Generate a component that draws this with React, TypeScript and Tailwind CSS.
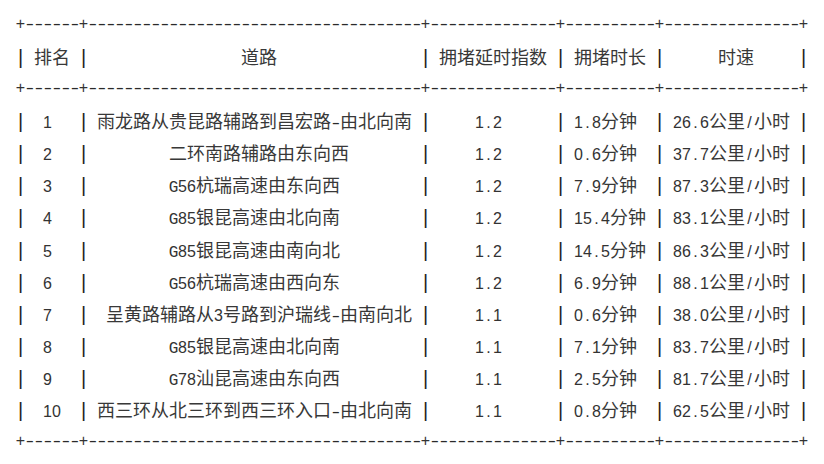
import React from "react";

const header = ["排名", "道路", "拥堵延时指数", "拥堵时长", "时速"];
const rows: string[][] = [
  ["1", "雨龙路从贵昆路辅路到昌宏路-由北向南", "1.2", "1.8分钟", "26.6公里/小时"],
  ["2", "二环南路辅路由东向西", "1.2", "0.6分钟", "37.7公里/小时"],
  ["3", "G56杭瑞高速由东向西", "1.2", "7.9分钟", "87.3公里/小时"],
  ["4", "G85银昆高速由北向南", "1.2", "15.4分钟", "83.1公里/小时"],
  ["5", "G85银昆高速由南向北", "1.2", "14.5分钟", "86.3公里/小时"],
  ["6", "G56杭瑞高速由西向东", "1.2", "6.9分钟", "88.1公里/小时"],
  ["7", "呈黄路辅路从3号路到沪瑞线-由南向北", "1.1", "0.6分钟", "38.0公里/小时"],
  ["8", "G85银昆高速由北向南", "1.1", "7.1分钟", "83.7公里/小时"],
  ["9", "G78汕昆高速由东向西", "1.1", "2.5分钟", "81.7公里/小时"],
  ["10", "西三环从北三环到西三环入口-由北向南", "1.1", "0.8分钟", "62.5公里/小时"],
];

const isWide = (ch: string) => /[\u2E80-\u9FFF\uFF00-\uFFEF\u3000-\u303F]/.test(ch);
const dw = (s: string) => [...s].reduce((a, c) => a + (isWide(c) ? 2 : 1), 0);

function center(s: string, width: number) {
  const ex = width - dw(s);
  const h = Math.floor(ex / 2);
  if (ex % 2) {
    if (dw(s) % 2) return " ".repeat(h) + s + " ".repeat(h + 1);
    return " ".repeat(h + 1) + s + " ".repeat(h);
  }
  return " ".repeat(h) + s + " ".repeat(h);
}

const widths = header.map((h, i) => Math.max(dw(h), ...rows.map((r) => dw(r[i]))));
const border = "+" + widths.map((w) => "-".repeat(w + 2)).join("+") + "+";
const line = (cells: string[]) =>
  "|" + cells.map((c, i) => " " + center(c, widths[i]) + " ").join("|") + "|";

const lines = [border, line(header), border, ...rows.map(line), border];

function Glyph({ ch }: { ch: string }) {
  if (isWide(ch)) {
    return (
      <span className="flex w-[18px] shrink-0 justify-center text-[18px] leading-[32px] text-[#383838] [font-family:'Noto_Sans_CJK_SC',sans-serif]">
        {ch}
      </span>
    );
  }
  if (ch === " ") return <span className="w-[9px] shrink-0" />;
  if (ch === "|") {
    return (
      <span className="flex w-[9px] shrink-0 justify-center text-[20px] leading-[32px] text-[#222] [font-family:'Liberation_Sans',sans-serif]">
        |
      </span>
    );
  }
  if (ch === "-") {
    return (
      <span className="flex w-[9px] shrink-0 justify-center text-[17px] leading-[32px] text-[#2a2a2a] [font-family:'Liberation_Sans',sans-serif]">
        <span className="inline-block scale-x-[1.45]">-</span>
      </span>
    );
  }
  if (/[A-Za-z]/.test(ch)) {
    return (
      <span className="flex w-[9px] shrink-0 justify-center text-[16px] leading-[32px] text-[#333] [font-family:'Liberation_Mono',monospace]">
        {ch}
      </span>
    );
  }
  return (
    <span className="flex w-[9px] shrink-0 justify-center text-[16px] leading-[32px] text-[#333] [font-family:'Liberation_Sans',sans-serif]">
      {ch}
    </span>
  );
}

function Line({ text }: { text: string }) {
  return (
    <div className="flex h-[32.08px] items-baseline overflow-visible">
      {[...text].map((ch, i) => (
        <Glyph key={i} ch={ch} />
      ))}
    </div>
  );
}

export default function App() {
  return (
    <div className="h-[464px] w-[824px] overflow-hidden bg-white pl-[16px] pt-[8px]">
      {lines.map((l, i) => (
        <Line key={i} text={l} />
      ))}
    </div>
  );
}
